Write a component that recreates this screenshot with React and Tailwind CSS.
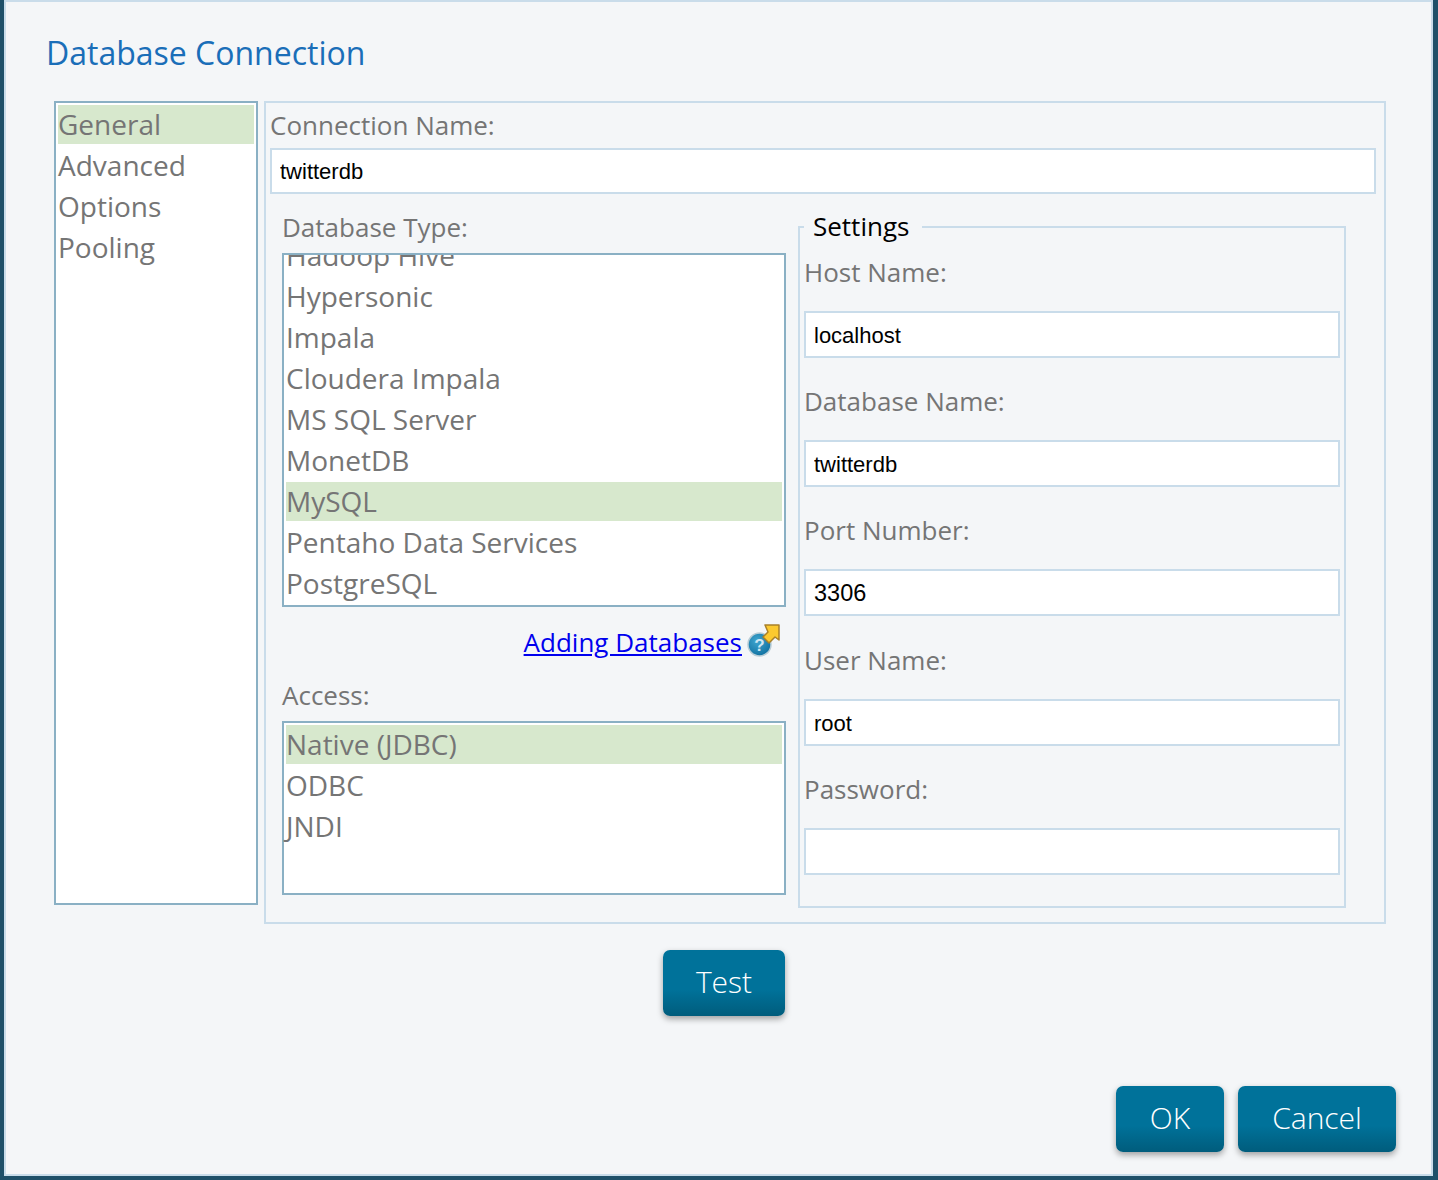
import React from "react";

const labelClass = "text-[26px] leading-[36px] text-[#757575]";
const rowClass = "h-[39px] mb-[2px] leading-[39px] text-[28px] text-[#757575] whitespace-nowrap";

const ListRow = ({ label, selected }) => (
  <div className={`${rowClass} ${selected ? "bg-[#d7e8cd]" : ""}`}>{label}</div>
);

const TextBox = ({ value, className = "" }) => (
  <input
    readOnly
    type="text"
    value={value}
    className={`block border-2 border-[#c9dcea] bg-white px-[8px] pt-[2px] font-['Liberation_Sans',sans-serif] text-[22px] text-black outline-none ${className}`}
  />
);

const Field = ({ label, value, inputClass = "", className = "" }) => (
  <div className={`mb-[25px] ${className}`}>
    <div className={`${labelClass} h-[57px]`}>{label}</div>
    <TextBox value={value} className={`h-[47px] w-[536px] ${inputClass}`} />
  </div>
);

const Button = ({ children, className = "" }) => (
  <button className={`h-[66px] rounded-[7px] bg-gradient-to-b from-[#00729a] from-60% to-[#005c7c] pb-[3px] text-[30px] font-light text-white shadow-[0_3px_6px_rgba(0,0,0,0.35)] ${className}`}>
    {children}
  </button>
);

const HelpIcon = () => (
  <svg width="34" height="34" viewBox="0 0 34 34">
    <defs>
      <radialGradient id="ball" cx="0.4" cy="0.35" r="0.7">
        <stop offset="0" stopColor="#3fa6d0" />
        <stop offset="1" stopColor="#0f6f9f" />
      </radialGradient>
    </defs>
    <circle cx="13.5" cy="20.5" r="11.5" fill="url(#ball)" stroke="#b9cdd6" strokeWidth="1.5" />
    <text x="13.5" y="27" textAnchor="middle" fontSize="17" fontWeight="700" fill="#cfe6f2" fontFamily="Liberation Sans, sans-serif">?</text>
    <path d="M19 1h14v15l-4-3-6 6-6-6 5-5z" fill="#fbc92f" stroke="#a8802a" strokeWidth="1.5" strokeLinejoin="round" />
  </svg>
);

export default function App() {
  return (
    <div className="h-[1180px] w-[1438px] overflow-hidden bg-[#1f5069] pb-[4px] pl-[4px] pr-[5px] font-['Open_Sans',sans-serif]">
      <div className="flex h-full flex-col border-2 border-[#c9dcea] bg-[#f4f6f8]">
        <h1 className="h-[99px] pl-[40px] pt-[29px] text-[32px] leading-[44px] text-[#1a6eb8]">Database Connection</h1>

        <div className="flex gap-[6px] pl-[48px]">
          {/* Left nav */}
          <div className="h-[804px] w-[204px] border-2 border-[#8ab0c4] bg-white p-[2px]">
            <ListRow label="General" selected />
            <ListRow label="Advanced" />
            <ListRow label="Options" />
            <ListRow label="Pooling" />
          </div>

          {/* Main panel */}
          <div className="h-[823px] w-[1122px] border-2 border-[#c9dcea] pl-[4px] pt-[4px]">
            <div className={`${labelClass} h-[41px]`}>Connection Name:</div>
            <TextBox value="twitterdb" className="h-[46px] w-[1106px]" />

            <div className="ml-[12px] mt-[14px] flex gap-[12px]">
              <div className="w-[504px]">
                <div className={`${labelClass} h-[45px] pt-[1px]`}>Database Type:</div>
                <div className="h-[354px] overflow-hidden border-2 border-[#8ab0c4] bg-white px-[2px]">
                  <div className="-mt-[19px]">
                    <ListRow label="Hadoop Hive" />
                    <ListRow label="Hypersonic" />
                    <ListRow label="Impala" />
                    <ListRow label="Cloudera Impala" />
                    <ListRow label="MS SQL Server" />
                    <ListRow label="MonetDB" />
                    <ListRow label="MySQL" selected />
                    <ListRow label="Pentaho Data Services" />
                    <ListRow label="PostgreSQL" />
                  </div>
                </div>

                <div className="mt-[18px] flex h-[32px] items-center justify-end gap-[4px] pr-[6px]">
                  <a href="#" className="pt-[2px] text-[26px] text-[#0000ee] underline">Adding Databases</a>
                  <HelpIcon />
                </div>

                <div className={`${labelClass} mt-[20px] h-[44px]`}>Access:</div>
                <div className="h-[174px] border-2 border-[#8ab0c4] bg-white p-[2px]">
                  <ListRow label="Native (JDBC)" selected />
                  <ListRow label="ODBC" />
                  <ListRow label="JNDI" />
                </div>
              </div>

              <fieldset className="h-[700px] w-[548px] border-2 border-[#c9dcea] pl-[4px]">
                <legend className="h-[38px] pl-[9px] pr-[13px] text-[26px] leading-[36px] text-black">Settings</legend>
                <div className="mt-[8px]">
                  <Field label="Host Name:" value="localhost" />
                  <Field label="Database Name:" value="twitterdb" />
                  <Field label="Port Number:" value="3306" inputClass="text-[23.5px]" className="mb-[26px]" />
                  <Field label="User Name:" value="root" />
                  <Field label="Password:" value="" />
                </div>
              </fieldset>
            </div>
          </div>
        </div>

        <div className="ml-[657px] mt-[26px]">
          <Button className="w-[122px]">Test</Button>
        </div>

        <div className="mt-auto flex justify-end gap-[14px] pb-[22px] pr-[35px]">
          <Button className="w-[108px]">OK</Button>
          <Button className="w-[158px]">Cancel</Button>
        </div>
      </div>
    </div>
  );
}
